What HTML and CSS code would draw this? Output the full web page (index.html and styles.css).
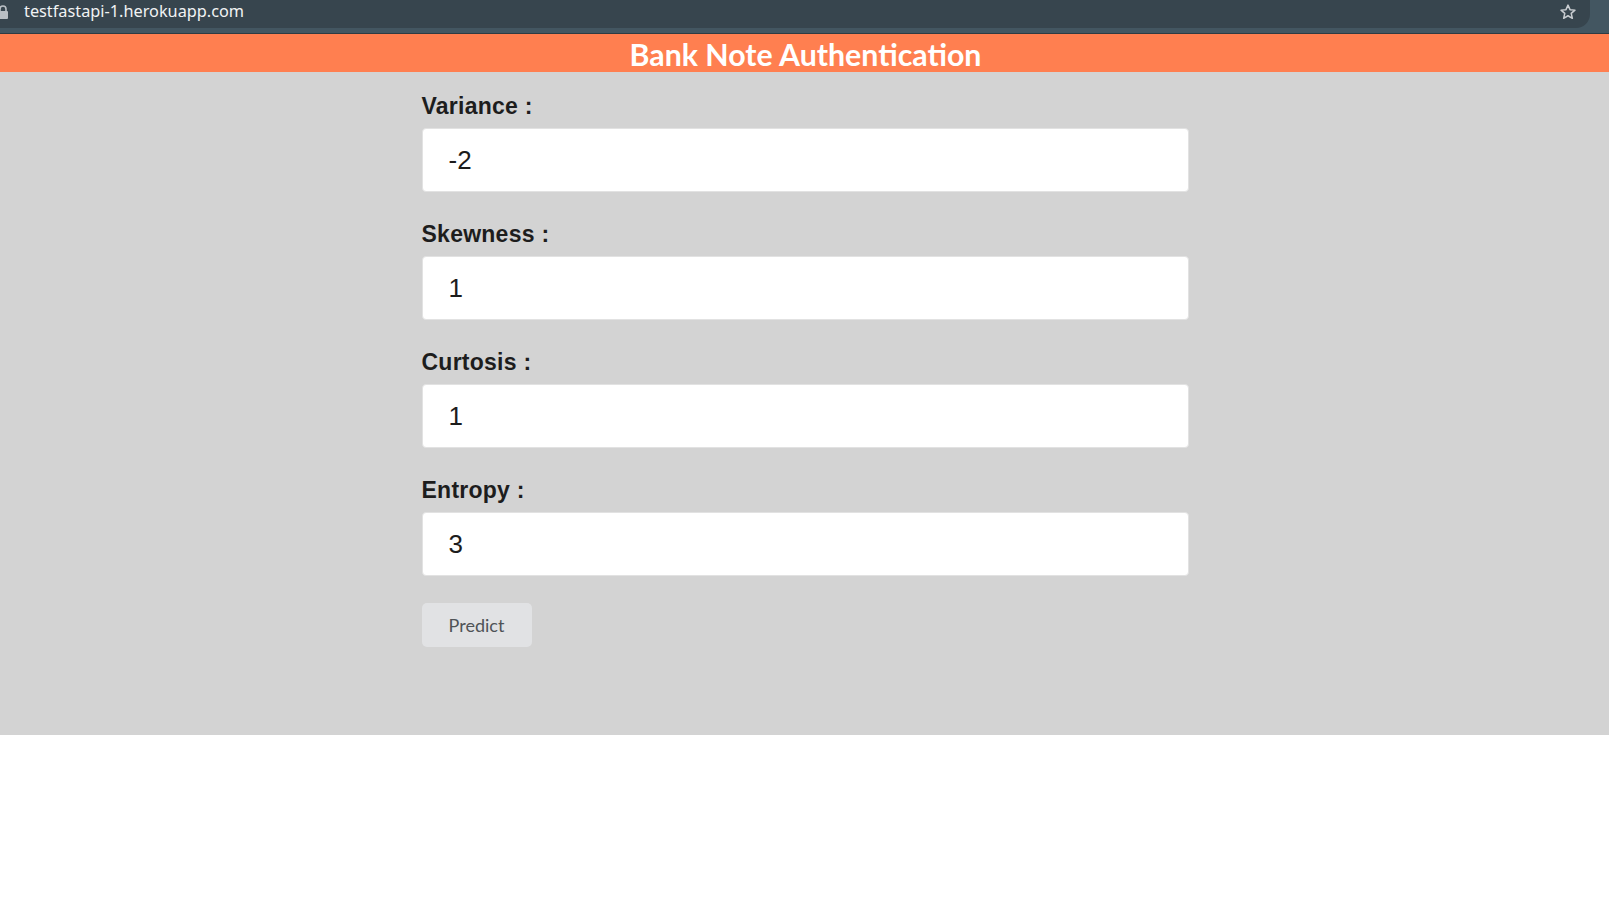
FILE: index.html
```html
<!DOCTYPE html>
<html lang="en">
<head>
<meta charset="utf-8">
<title>Bank Note Authentication</title>
<link rel="stylesheet" href="styles.css">
</head>
<body>
<div class="chrome">
  <div class="omnibox">
    <svg class="lock" width="12" height="14" viewBox="0 0 12 14"><path d="M3 6V4a3 3 0 0 1 6 0v2" fill="none" stroke="#b9bfc4" stroke-width="1.6"/><rect x="1" y="6" width="10" height="8" rx="1" fill="#b9bfc4"/></svg>
    <span class="url">testfastapi-1.herokuapp.com</span>
    <svg class="star" width="18" height="18" viewBox="0 0 24 24"><path d="M12 2.8l2.7 6.1 6.6.6-5 4.4 1.5 6.5L12 17l-5.8 3.4 1.5-6.5-5-4.4 6.6-.6z" fill="none" stroke="#c9cdd1" stroke-width="2" stroke-linejoin="round"/></svg>
  </div>
</div>
<header class="banner"><h1>Bank Note Authentication</h1></header>
<main class="content">
  <form class="form">
    <label class="field"><span class="label">Variance :</span><input class="input" type="text" value="-2"></label>
    <label class="field"><span class="label">Skewness :</span><input class="input" type="text" value="1"></label>
    <label class="field"><span class="label">Curtosis :</span><input class="input" type="text" value="1"></label>
    <label class="field"><span class="label">Entropy :</span><input class="input" type="text" value="3"></label>
    <button class="predict" type="button">Predict</button>
  </form>
</main>
</body>
</html>
```
FILE: styles.css
```css
html, body {
  margin: 0;
  padding: 0;
  background: #ffffff;
}

.chrome {
  height: 33px;
  background: #435661;
  border-bottom: 1px solid #2f3b42;
}

.omnibox {
  height: 28px;
  width: 1590px;
  background: #37454e;
  border-bottom-right-radius: 14px;
  display: flex;
  align-items: center;
}

.lock {
  margin-left: -3px;
  margin-top: -4px;
}

.url {
  margin-left: 15px;
  margin-top: -7px;
  font-family: "Noto Sans", "Open Sans", sans-serif;
  font-size: 16.3px;
  color: #f1f3f4;
}

.star {
  margin-left: auto;
  margin-right: 13px;
  margin-top: -5px;
}

.banner {
  height: 38px;
  background: #ff7f50;
  display: flex;
  align-items: center;
  justify-content: center;
}

.banner h1 {
  margin: 0;
  font-family: Lato, "Open Sans", sans-serif;
  font-weight: 700;
  font-size: 30.3px;
  line-height: 38px;
  color: #ffffff;
  padding-left: 2px;
  padding-top: 2px;
}

.content {
  background: #d3d3d3;
  padding: 21px 0 88px;
}

.form {
  width: 767px;
  margin: 0 auto;
  display: flex;
  flex-direction: column;
  align-items: flex-start;
  padding-left: 1px;
}

.field {
  display: flex;
  flex-direction: column;
  width: 100%;
  margin-bottom: 29px;
}

.field:nth-of-type(4) {
  margin-bottom: 27px;
}

.label {
  font-family: "Liberation Sans", Arial, sans-serif;
  font-weight: 700;
  font-size: 23px;
  letter-spacing: 0.25px;
  line-height: 26px;
  color: #1d1d1d;
  margin-bottom: 9px;
}

.input {
  box-sizing: border-box;
  width: 100%;
  height: 64px;
  margin: 0;
  padding: 0 0 0 26px;
  border: 1px solid #e2e2e2;
  border-radius: 4px;
  background: #ffffff;
  font-family: "Liberation Sans", Arial, sans-serif;
  font-size: 26px;
  color: #1c1c1c;
  outline: none;
}

.predict {
  box-sizing: border-box;
  width: 110px;
  height: 44px;
  border: none;
  border-radius: 5px;
  background: #e1e2e4;
  font-family: Lato, "Open Sans", sans-serif;
  font-size: 18px;
  color: #4f5357;
  padding: 0;
}
```
